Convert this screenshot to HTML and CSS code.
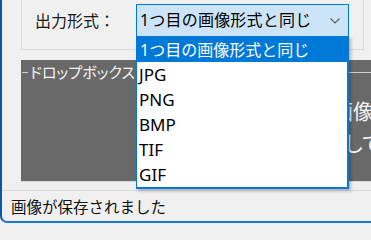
FILE: index.html
```html
<!DOCTYPE html>
<html lang="ja">
<head>
<meta charset="utf-8">
<link rel="stylesheet" href="styles.css">
</head>
<body>
<div class="window">
  <div class="top-group">
    <span class="field-label">出力形式：</span>
    <div class="combo">
      <span class="combo-text">1つ目の画像形式と同じ</span>
      <svg class="chevron" width="10" height="6" viewBox="0 0 10 6"><polyline points="0.5,0.5 5,5 9.5,0.5" fill="none" stroke="#5a5a5a" stroke-width="1.1"/></svg>
    </div>
  </div>
  <div class="drop-panel">
    <div class="legend">
      <span class="legend-line short"></span>
      <span class="legend-text">ドロップボックス</span>
      <span class="legend-line rest"></span>
    </div>
    <div class="hint">
      <div class="hint-line first">ここに画像をドロップ</div>
      <div class="hint-line second">してください</div>
    </div>
  </div>
  <div class="status">画像が保存されました</div>
  <ul class="listbox">
    <li class="item selected">1つ目の画像形式と同じ</li>
    <li class="item latin">JPG</li>
    <li class="item latin">PNG</li>
    <li class="item latin">BMP</li>
    <li class="item latin">TIF</li>
    <li class="item latin">GIF</li>
  </ul>
</div>
</body>
</html>
```
FILE: styles.css
```css
html, body {
  margin: 0;
  padding: 0;
}
body {
  width: 371px;
  height: 223px;
  overflow: hidden;
  background: #f0f0f0;
  font-family: "Noto Sans", "Noto Sans CJK JP", sans-serif;
  color: #000;
}
.window {
  position: relative;
  box-sizing: border-box;
  width: 420px;
  height: 223px;
  border-left: 2px solid #0b56a8;
  border-bottom: 2px solid #1a78d2;
  border-bottom-left-radius: 7px;
  display: flex;
  flex-direction: column;
  background: #f0f0f0;
}
.top-group {
  box-sizing: border-box;
  margin-left: 19px;
  width: 343px;
  height: 50px;
  border: 1px solid #dcdcdc;
  border-top: none;
  display: flex;
  align-items: flex-start;
  padding: 4px 0 0 13px;
}
.field-label {
  width: 101px;
  font-family: "Noto Sans CJK JP", sans-serif;
  font-size: 16px;
  line-height: 33px;
  color: #1a1a1a;
}
.combo {
  box-sizing: border-box;
  width: 213px;
  height: 33px;
  background: #cce4f7;
  border: 1px solid #0078d7;
  display: flex;
  align-items: center;
  padding-left: 3px;
}
.combo-text {
  flex: 1;
  font-size: 16px;
  line-height: 31px;
  letter-spacing: 0.2px;
}
.chevron {
  margin-right: 8px;
  margin-top: 1px;
}
.drop-panel {
  margin-top: 10px;
  margin-left: 19px;
  height: 121px;
  background: #696969;
  border-bottom: 1px solid #d8d8d8;
  color: #f4f4f4;
}
.legend {
  display: flex;
  align-items: center;
  height: 24px;
  padding-left: 1px;
}
.legend-line {
  height: 1px;
  background: #d0d0d0;
}
.legend-line.short {
  width: 6px;
}
.legend-line.rest {
  flex: 1;
  margin-left: 4px;
}
.legend-text {
  margin-left: 2px;
  font-family: "Noto Sans CJK JP", sans-serif;
  font-feature-settings: "palt";
  font-size: 15px;
  line-height: 24px;
}
.hint {
  margin-top: 10px;
  font-family: "Noto Sans CJK JP", sans-serif;
  font-size: 21px;
  line-height: 32px;
  white-space: nowrap;
}
.hint-line.first {
  margin-left: 248px;
}
.hint-line.second {
  margin-left: 324px;
  font-feature-settings: "palt";
}
.status {
  margin-top: 8px;
  flex: 1;
  border-top: 1px solid #dadada;
  padding-left: 9px;
  font-family: "Noto Sans CJK JP", sans-serif;
  font-size: 15.5px;
  line-height: 30px;
  color: #111;
}
.listbox {
  position: absolute;
  left: 134px;
  top: 36px;
  box-sizing: border-box;
  width: 213px;
  margin: 0;
  padding: 0;
  list-style: none;
  background: #fff;
  border: 1px solid #0078d7;
  border-right-width: 2px;
  border-bottom-width: 2px;
  box-shadow: 2px 2px 3px rgba(0, 0, 0, 0.25);
}
.item {
  height: 25px;
  line-height: 26px;
  padding-left: 3px;
  font-size: 16px;
  white-space: nowrap;
}
.item.latin {
  font-size: 17px;
  padding-left: 2px;
}
.item.selected {
  background: #0078d7;
  color: #fff;
}
```
